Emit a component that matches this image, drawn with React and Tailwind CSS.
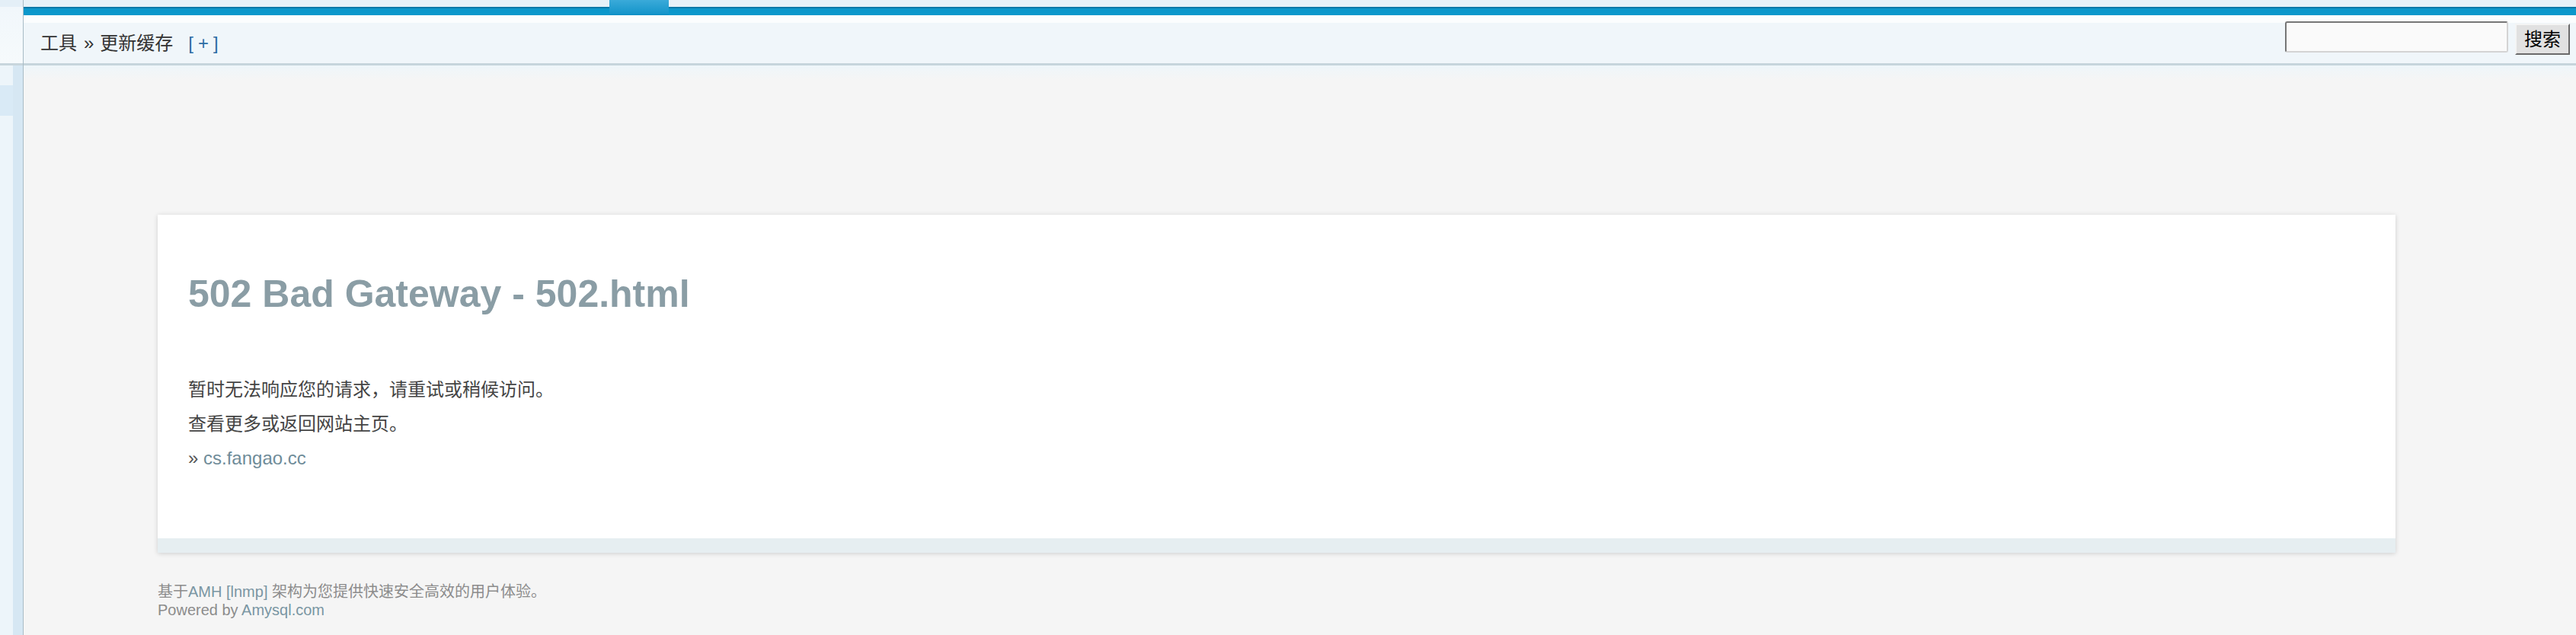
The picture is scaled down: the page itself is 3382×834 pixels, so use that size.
export default function App() {
  return (
    <div className="flex h-[834px] w-full overflow-hidden bg-[#f5f5f5] font-['Liberation_Sans','Noto_Sans_CJK_SC',sans-serif]">
      <aside className="flex w-[31px] shrink-0 flex-col border-r border-[#a9bcc6]">
        <div className="h-[83px] bg-[linear-gradient(to_bottom,#e4eff7_0,#e4eff7_9px,#f1f7fb_9px,#f6fafc_100%)]" />
        <div className="h-[3px] bg-[#c8d6dd]" />
        <div className="flex flex-1">
          <div className="flex w-[17px] flex-col bg-[#edf5fa]">
            <div className="mt-[26px] h-[40px] bg-[#d9eaf6]" />
          </div>
          <div className="flex-1 bg-[#d6e7f3]" />
        </div>
      </aside>

      <main className="flex min-w-0 flex-1 flex-col">
        <div className="flex h-[20px]">
          <div className="flex w-[769px] flex-col">
            <div className="h-[9px] bg-[#e6f1f8]" />
            <div className="h-[11px] border-t-2 border-[#0b78a8] bg-[#0b97cb]" />
          </div>
          <div className="w-[78px] bg-[linear-gradient(to_bottom,#3aaad9,#1796cb_85%,#0b8fc4)]" />
          <div className="flex flex-1 flex-col">
            <div className="h-[9px] bg-[#e6f1f8]" />
            <div className="h-[11px] border-t-2 border-[#0b78a8] bg-[#0b97cb]" />
          </div>
        </div>

        <div className="flex h-[63px] justify-between bg-[linear-gradient(to_bottom,#fbfdfe_0,#fbfdfe_10px,#f0f6fa_10px)]">
          <div className="flex items-center pl-[22px] pt-[10px] text-[24px] text-[#333]">
            <span>工具</span>
            <span className="ml-[9px]">»</span>
            <span className="ml-[8px]">更新缓存</span>
            <span className="ml-[20px] tracking-[6px] text-[#2b6ca3]">[+]</span>
          </div>
          <div className="flex items-start pr-[8px]">
            <input
              type="text"
              className="mt-[8px] h-[41px] w-[293px] rounded-[3px] border-2 border-b-[#d4d4d4] border-l-[#767676] border-r-[#d4d4d4] border-t-[#767676] bg-[#fafafa] outline-none"
            />
            <button className="ml-[9px] mt-[11px] h-[41px] w-[72px] border-2 border-b-[#6a6a6a] border-l-[#f4f4f4] border-r-[#6a6a6a] border-t-[#f4f4f4] bg-[#e1e1e1] text-[24px] leading-none text-black">
              搜索
            </button>
          </div>
        </div>
        <div className="h-[3px] bg-[#c6d5dc]" />
        <div className="h-[19px] bg-[linear-gradient(to_bottom,#eef6fa,#f5f5f5)]" />

        <div className="flex-1 pl-[176px] pr-[237px] pt-[177px]">
          <div className="bg-white shadow-[0_1px_6px_rgba(0,0,0,0.16)]">
            <div className="px-[40px] pb-[83px] pt-[79px]">
              <h1 className="text-[50px] font-bold leading-[50px] text-[#8a9da5]">
                502 Bad Gateway - 502.html
              </h1>
              <div className="mt-[78px] text-[24px] leading-[45px] text-[#444]">
                <p>暂时无法响应您的请求，请重试或稍候访问。</p>
                <p>查看更多或返回网站主页。</p>
                <p>
                  <span className="text-[#555]">» </span>
                  <span className="text-[#6f8c99]">cs.fangao.cc</span>
                </p>
              </div>
            </div>
            <div className="h-[19px] bg-[#e6eef1]" />
          </div>

          <div className="mt-[39px] text-[20px] leading-[24px] text-[#8c8c8c]">
            <p>
              基于<span className="text-[#7a96a3]">AMH [lnmp]</span> 架构为您提供快速安全高效的用户体验。
            </p>
            <p>
              Powered by <span className="text-[#7a96a3]">Amysql.com</span>
            </p>
          </div>
        </div>
      </main>
    </div>
  );
}
